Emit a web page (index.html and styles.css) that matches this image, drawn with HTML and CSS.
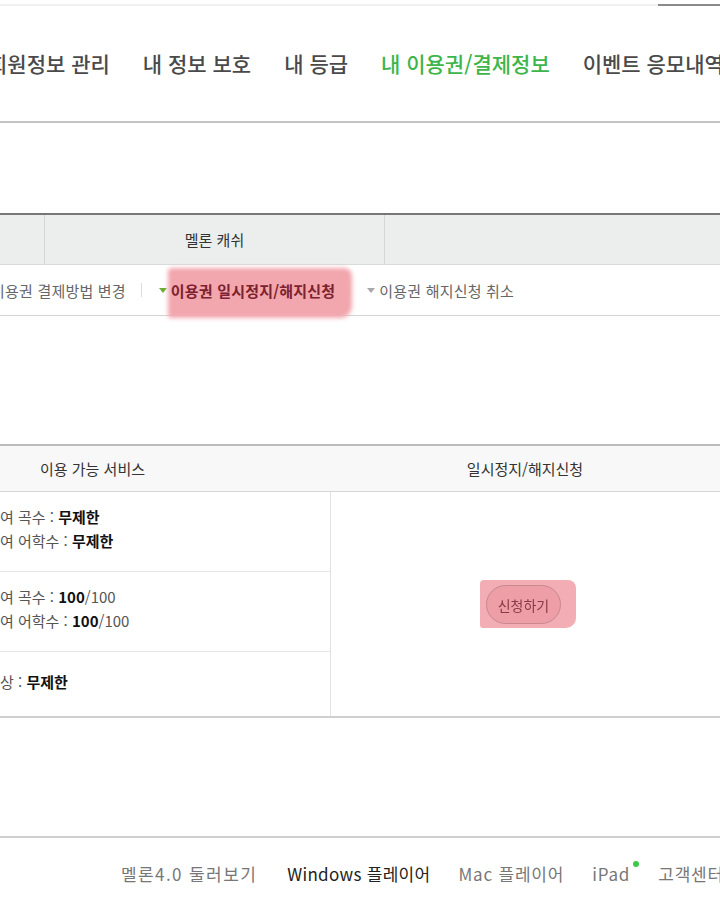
FILE: index.html
```html
<!DOCTYPE html>
<html lang="ko">
<head>
    <meta charset="UTF-8">
    <meta name="viewport" content="width=device-width, initial-scale=1.0">
    <title>내 이용권/결제정보</title>
    <link rel="stylesheet" href="styles.css">
</head>
<body>
    <div class="page">
        <!-- 상단 라인 -->
        <div class="topline">
            <div class="topline-rest"></div>
            <div class="topline-on"></div>
        </div>

        <!-- 마이페이지 메뉴 -->
        <div class="gnb">
            <span class="gnb-item">회원정보 관리</span>
            <span class="gnb-item">내 정보 보호</span>
            <span class="gnb-item">내 등급</span>
            <span class="gnb-item on">내 이용권/결제정보</span>
            <span class="gnb-item">이벤트 응모내역</span>
        </div>

        <!-- 탭 -->
        <div class="cash-tab">
            <div class="cash-cell first"></div>
            <div class="cash-cell mid">멜론 캐쉬</div>
            <div class="cash-cell last"></div>
        </div>

        <div class="subnav">
            <span class="sub-item">이용권 결제방법 변경</span>
            <span class="sub-sep"></span>
            <span class="tri green"></span>
            <span class="sub-item on">이용권 일시정지/해지신청</span>
            <span class="sub-sep wide"></span>
            <span class="tri"></span>
            <span class="sub-item">이용권 해지신청 취소</span>
        </div>

        <!-- 이용 가능 서비스 -->
        <div class="svc">
            <div class="svc-head">
                <div class="th-left">이용 가능 서비스</div>
                <div class="th-right">일시정지/해지신청</div>
            </div>
            <div class="svc-body">
                <div class="svc-list">
                    <div class="svc-row">
                        <p>여 곡수 : <b>무제한</b></p>
                        <p>여 어학수 : <b>무제한</b></p>
                    </div>
                    <div class="svc-row">
                        <p>여 곡수 : <b>100</b>/100</p>
                        <p>여 어학수 : <b>100</b>/100</p>
                    </div>
                    <div class="svc-row last">
                        <p>상 : <b>무제한</b></p>
                    </div>
                </div>
                <div class="svc-apply">
                    <span class="apply-mark">
                        <button class="apply-btn">신청하기</button>
                    </span>
                </div>
            </div>
        </div>

        <!-- 하단 링크 -->
        <div class="footer">
            <span class="foot-item wide">멜론4.0 둘러보기</span>
            <span class="foot-item strong">Windows 플레이어</span>
            <span class="foot-item">Mac 플레이어</span>
            <span class="foot-item new">iPad</span>
            <span class="foot-item">고객센터</span>
        </div>
    </div>
</body>
</html>
```

FILE: styles.css
```css
html, body {
    overflow: hidden;
}
body {
    margin: 0;
    font-family: "Noto Sans CJK KR", "Noto Sans", sans-serif;
    color: #333;
    background: #fff;
}
.page {
    width: 720px;
    height: 904px;
    overflow: hidden;
}
p {
    margin: 0;
}

/* 상단 라인 */
.topline {
    display: flex;
    margin-top: 4px;
    height: 2px;
}
.topline-rest {
    flex: 1;
    background: #f0f0f0;
}
.topline-on {
    width: 62px;
    background: #8a8a8a;
}

/* 메뉴 */
.gnb {
    display: flex;
    align-items: center;
    gap: 33px;
    height: 114px;
    margin-left: -12px;
    padding-bottom: 1px;
    border-bottom: 2px solid #c4c4c4;
    white-space: nowrap;
}
.gnb-item {
    font-size: 21px;
    font-weight: 500;
    color: #4a4a4a;
}
.gnb-item.on {
    color: #3db54a;
}

/* 탭 */
.cash-tab {
    display: flex;
    height: 49px;
    margin-top: 90px;
    border-top: 2px solid #777;
    border-bottom: 1px solid #d8dbda;
    background: #ebeeed;
}
.cash-cell {
    display: flex;
    align-items: center;
    justify-content: center;
    font-size: 15px;
    color: #333;
    border-right: 1px solid #d3d6d5;
}
.cash-cell.first {
    width: 44px;
}
.cash-cell.mid {
    width: 339px;
}
.cash-cell.last {
    flex: 1;
    border-right: 0;
}

.subnav {
    display: flex;
    align-items: center;
    height: 50px;
    margin-left: -9px;
    border-bottom: 1px solid #d4d4d4;
    font-size: 15px;
    letter-spacing: 0.2px;
    color: #666;
    white-space: nowrap;
}
.sub-sep {
    width: 1px;
    height: 14px;
    margin: 0 13px 0 15px;
    background: #ddd;
}
.sub-sep.wide {
    margin: 0 17px 0 14px;
}
.tri {
    width: 0;
    height: 0;
    margin-right: 4px;
    border-left: 4px solid transparent;
    border-right: 4px solid transparent;
    border-top: 5px solid #a8a8a8;
}
.tri.green {
    margin-left: 4px;
    border-top-color: #6cab35;
}
.sub-item.on {
    position: relative;
    z-index: 0;
    font-weight: 700;
    color: #7c2230;
}
.sub-item.on::before {
    content: "";
    position: absolute;
    left: -3px;
    right: -17px;
    top: -12px;
    bottom: -17px;
    z-index: -1;
    background: #f2a6ae;
    border-radius: 4px 8px 12px 3px;
    filter: blur(2px);
}

/* 이용 가능 서비스 */
.svc {
    margin-top: 128px;
    border-top: 2px solid #bdbdbd;
    border-bottom: 2px solid #cfcfcf;
}
.svc-head {
    display: flex;
    align-items: center;
    height: 45px;
    background: #f8f8f8;
    border-bottom: 1px solid #d6d6d6;
    font-size: 15px;
    color: #333;
}
.th-left {
    width: 330px;
    padding-left: 40px;
    box-sizing: border-box;
}
.th-right {
    flex: 1;
    text-align: center;
}
.svc-body {
    display: flex;
}
.svc-list {
    width: 330px;
    border-right: 1px solid #e2e2e2;
}
.svc-row {
    display: flex;
    flex-direction: column;
    justify-content: center;
    box-sizing: border-box;
    height: 80px;
    padding-bottom: 5px;
    border-bottom: 1px solid #e6e6e6;
    font-size: 15px;
    line-height: 24px;
    color: #555;
    white-space: nowrap;
}
.svc-row.last {
    height: 64px;
    border-bottom: 0;
}
.svc-row b {
    font-weight: 700;
    color: #111;
}
.svc-apply {
    flex: 1;
    display: flex;
    align-items: center;
    justify-content: center;
    padding-left: 5px;
}
.apply-mark {
    display: inline-block;
    padding: 5px 15px 4px 6px;
    background: #f3aeb5;
    border-radius: 4px 8px 10px 3px;
    filter: blur(0.5px);
}
.apply-btn {
    display: block;
    height: 39px;
    padding: 0 11px;
    font-family: inherit;
    font-size: 14px;
    color: #8a3a47;
    background: #ee9ea7;
    border: 1px solid #c98890;
    border-radius: 20px;
}

/* 하단 */
.footer {
    display: flex;
    align-items: center;
    gap: 28px;
    height: 70px;
    margin-top: 118px;
    padding-left: 121px;
    border-top: 2px solid #cfcfcf;
    font-size: 17px;
    letter-spacing: 0.8px;
    color: #777;
    white-space: nowrap;
}
.foot-item.wide {
    margin-right: 2px;
    letter-spacing: 1.4px;
}
.foot-item.strong {
    letter-spacing: 0.3px;
    color: #222;
}
.foot-item.new {
    position: relative;
}
.foot-item.new::after {
    content: "";
    position: absolute;
    right: -9px;
    top: 0;
    width: 6px;
    height: 6px;
    border-radius: 50%;
    background: #3cc84a;
}
```
